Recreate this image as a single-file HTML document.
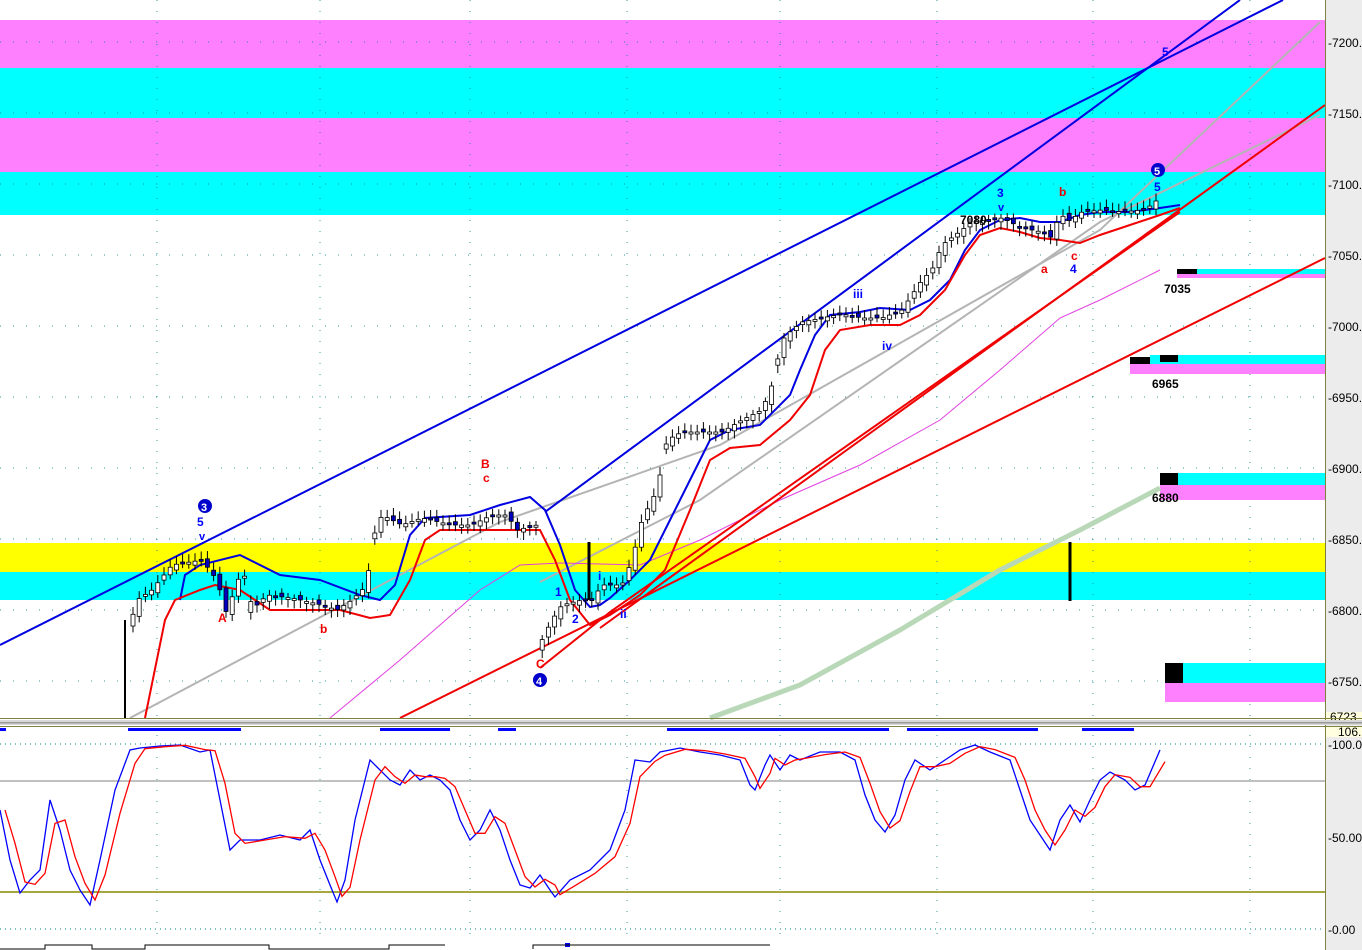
<!DOCTYPE html>
<html><head><meta charset="utf-8"><style>
html,body{margin:0;padding:0;background:#fff;width:1362px;height:950px;overflow:hidden}
svg{display:block;font-family:"Liberation Sans",sans-serif}
</style></head><body>
<svg id="s" width="1362" height="950" xmlns="http://www.w3.org/2000/svg">
<rect x="0" y="0" width="1362" height="950" fill="#fff"/>
<rect x="0" y="20" width="1325" height="48" fill="#ff80ff"/>
<rect x="0" y="68" width="1325" height="50" fill="#00ffff"/>
<rect x="0" y="118" width="1325" height="54" fill="#ff80ff"/>
<rect x="0" y="172" width="1325" height="43" fill="#00ffff"/>
<rect x="0" y="543" width="1325" height="29" fill="#ffff00"/>
<rect x="0" y="572" width="1325" height="28" fill="#00ffff"/>
<g id="grid" stroke="#008080" stroke-width="1" stroke-dasharray="1,10" opacity="0.8"></g>
<rect x="1177" y="269" width="20" height="5" fill="#000"/><rect x="1197" y="269" width="128" height="5" fill="#0ff"/><rect x="1177" y="274" width="148" height="4" fill="#ff80ff"/>
<rect x="1130" y="357" width="20" height="8" fill="#000"/><rect x="1150" y="355" width="175" height="9" fill="#0ff"/><rect x="1160" y="355" width="18" height="7" fill="#000"/><rect x="1130" y="364" width="195" height="10" fill="#ff80ff"/>
<rect x="1160" y="473" width="18" height="12" fill="#000"/><rect x="1178" y="473" width="147" height="12" fill="#0ff"/><rect x="1160" y="485" width="165" height="15" fill="#ff80ff"/>
<rect x="1165" y="663" width="18" height="20" fill="#000"/><rect x="1183" y="663" width="142" height="20" fill="#0ff"/><rect x="1165" y="683" width="160" height="19" fill="#ff80ff"/>
<g id="lines" fill="none"></g>
<g id="candles"></g>
<line x1="1070" y1="542" x2="1070" y2="601" stroke="#000" stroke-width="3"/>
<line x1="589" y1="542" x2="589" y2="600" stroke="#000" stroke-width="3"/>
<g font-size="12" font-weight="bold">
<text x="197" y="526" fill="#00f">5</text><text x="199" y="540" fill="#00f" font-size="11">v</text>
<text x="218" y="622" fill="#e00">A</text><text x="320" y="633" fill="#e00">b</text>
<text x="481" y="468" fill="#e00">B</text><text x="483" y="482" fill="#e00">c</text>
<text x="536" y="668" fill="#e00">C</text>
<text x="555" y="596" fill="#00f">1</text><text x="572" y="623" fill="#00f">2</text>
<text x="598" y="580" fill="#00f">i</text><text x="620" y="618" fill="#00f">ii</text>
<text x="853" y="298" fill="#00f">iii</text><text x="882" y="350" fill="#00f">iv</text>
<text x="997" y="197" fill="#00f">3</text><text x="998" y="211" fill="#00f" font-size="11">v</text>
<text x="960" y="224" fill="#000">7080</text>
<text x="1059" y="196" fill="#e00">b</text>
<text x="1041" y="273" fill="#e00">a</text><text x="1071" y="260" fill="#e00">c</text><text x="1070" y="273" fill="#00f">4</text>
<text x="1154" y="191" fill="#00f">5</text><text x="1162" y="56" fill="#00f">5</text>
<text x="1164" y="293" fill="#000">7035</text><text x="1152" y="388" fill="#000">6965</text><text x="1152" y="502" fill="#000">6880</text>
</g>
<circle cx="205" cy="506" r="7" fill="#00c"/><text x="201" y="511" fill="#fff" font-size="11" font-weight="bold">3</text>
<circle cx="540" cy="680" r="7" fill="#00c"/><text x="536" y="685" fill="#fff" font-size="11" font-weight="bold">4</text>
<circle cx="1158" cy="170" r="7" fill="#00c"/><text x="1154" y="175" fill="#fff" font-size="11" font-weight="bold">5</text>
<rect x="1325" y="0" width="37" height="950" fill="#ececec"/>
<line x1="1325.5" y1="0" x2="1325.5" y2="950" stroke="#808040"/>
<g id="ax" font-size="12" fill="#000"></g>
<rect x="1326" y="712" width="36" height="10" fill="#ffffe0"/><text x="1330" y="721" font-size="12">6723</text>
<rect x="0" y="718" width="1362" height="1" fill="#808040"/>
<rect x="0" y="720" width="1362" height="5" fill="#d8d8d8"/><rect x="0" y="722" width="1362" height="1.5" fill="#999"/>
<rect x="0" y="726" width="1362" height="1" fill="#808040"/>
<rect x="1326" y="727" width="36" height="10" fill="#ffffe0"/><text x="1338" y="736" font-size="12">106.</text>
<g fill="#00f"><rect x="0" y="728" width="6" height="3"/><rect x="128" y="728" width="113" height="3"/><rect x="380" y="728" width="70" height="3"/><rect x="498" y="728" width="18" height="3"/><rect x="667" y="728" width="222" height="3"/><rect x="907" y="728" width="131" height="3"/><rect x="1082" y="728" width="52" height="3"/><rect x="565" y="943" width="5" height="4"/></g>
<line x1="0" y1="781" x2="1325" y2="781" stroke="#808080"/>
<line x1="0" y1="892" x2="1325" y2="892" stroke="#8a8a00" stroke-width="1.5"/>
<line x1="0" y1="929" x2="1325" y2="929" stroke="#008080" stroke-dasharray="1,4"/>
<line x1="0" y1="744" x2="1325" y2="744" stroke="#008080" stroke-dasharray="1,4"/>
<g id="stoch" fill="none"></g>
<text x="1328" y="749" font-size="12">-100.0</text><text x="1328" y="842" font-size="12">-50.00</text><text x="1328" y="934" font-size="12">-0.00</text>
<polyline points="0,949 45,949 45,945 92,945 92,949 145,949 145,945 269,945 269,949 389,949 389,945 445,945" fill="none" stroke="#000"/>
<polyline points="533,949 533,945 770,945" fill="none" stroke="#000"/>
</svg>
<script>
(function(){
var NS="http://www.w3.org/2000/svg";
function el(p,t,a){var e=document.createElementNS(NS,t);for(var k in a)e.setAttribute(k,a[k]);document.getElementById(p).appendChild(e);return e;}
function pl(p,pts,c,w){el(p,"polyline",{points:pts.map(function(q){return q.join(",")}).join(" "),stroke:c,"stroke-width":w,fill:"none"});}
[157,320,470,627,780,937,1093,1250].forEach(function(x){el("grid","line",{x1:x,y1:0,x2:x,y2:718});el("grid","line",{x1:x,y1:735,x2:x,y2:940});});
[42,113,184,255,326,397,468,539,610,681].forEach(function(y){el("grid","line",{x1:0,y1:y,x2:1325,y2:y,"stroke-dasharray":"1,12"});});
var lab=["7200.","7150.","7100.","7050.","7000.","6950.","6900.","6850.","6800.","6750."];
lab.forEach(function(t,i){var y=42+i*71;var e=el("ax","text",{x:1328,y:y+5});e.textContent="-"+t;});
pl("lines",[[710,718],[800,685],[900,630],[1000,570],[1080,530],[1160,488]],"#b8d8b8",5);
pl("lines",[[130,718],[500,522],[720,445],[1100,230],[1320,22]],"#b4b4b4",2);
pl("lines",[[540,582],[700,500],[1100,222],[1320,115]],"#b4b4b4",2);
pl("lines",[[330,718],[400,660],[480,590],[520,565],[560,563],[640,565],[700,540],[780,500],[860,465],[940,420],[1000,370],[1060,318],[1100,300],[1160,270]],"#e040e0",1);
pl("lines",[[0,645],[1283,0]],"#0000e0",2);
pl("lines",[[545,512],[1240,0]],"#0000e0",2);
pl("lines",[[400,718],[1325,258]],"#f00000",2);
pl("lines",[[540,668],[610,612],[1180,212]],"#f00000",2);
pl("lines",[[600,628],[1325,105]],"#f00000",2);
var blue=[[180,600],[185,575],[200,565],[240,555],[280,575],[320,580],[360,595],[380,600],[395,585],[410,535],[425,518],[470,515],[500,505],[530,497],[545,510],[560,545],[575,590],[590,607],[600,605],[610,598],[630,580],[650,560],[670,520],[690,480],[710,440],[730,430],[760,425],[790,395],[800,370],[815,335],[830,315],[860,312],[880,308],[910,310],[930,300],[950,280],[965,250],[980,230],[1000,220],[1020,218],[1040,222],[1060,222],[1080,215],[1100,212],[1130,212],[1160,208],[1180,205]];
var red=[[145,718],[165,620],[175,600],[200,590],[215,585],[240,590],[270,610],[300,610],[340,610],[370,618],[390,615],[410,580],[425,540],[440,530],[500,530],[540,530],[555,560],[570,600],[590,625],[610,615],[640,595],[665,570],[690,510],[710,460],[730,448],[760,445],[790,420],[810,395],[825,350],[840,330],[870,325],[900,325],[920,315],[945,290],[965,255],[980,235],[1000,228],[1020,232],[1040,238],[1060,240],[1080,243],[1100,235],[1130,225],[1160,215],[1180,208]];
pl("lines",blue,"#0000e0",2);pl("lines",red,"#f00000",2);
pl("lines",[[125,718],[125,620]],"#000",2);
var P=[[128,625],[135,600],[150,590],[170,565],[200,560],[215,580],[225,615],[235,580],[245,575],[250,610],[265,595],[290,598],[320,605],[335,610],[350,600],[365,585],[370,540],[380,515],[400,525],[420,518],[450,525],[470,525],[490,515],[505,515],[515,530],[535,525],[540,640],[550,620],[560,605],[580,600],[590,600],[600,585],[620,585],[630,560],[640,520],[655,490],[665,440],[680,432],[720,432],[740,420],[760,410],[770,385],[780,340],[790,330],[800,322],[820,318],[840,314],[860,318],[880,318],[900,310],[910,295],[920,280],[930,270],[940,245],[960,230],[970,222],[1000,218],[1020,228],[1040,232],[1050,238],[1058,212],[1065,222],[1080,212],[1100,210],[1120,212],[1140,210],[1150,205],[1160,195]];
function py(x){for(var i=0;i<P.length-1;i++){if(x>=P[i][0]&&x<=P[i+1][0]){var t=(x-P[i][0])/(P[i+1][0]-P[i][0]);return P[i][1]+t*(P[i+1][1]-P[i][1]);}}return P[P.length-1][1];}
var prev=py(128);
for(var x=131;x<=1158;x+=6.2){var c=py(x);if(Math.abs(c-prev)>25)prev=c+8;var o=prev+(Math.sin(x*1.7)*3);var bt=Math.min(o,c),h=Math.max(Math.abs(c-o),2);
var fill=(c<o)?"#fff":"#0000c0";
el("candles","line",{x1:x+2,y1:bt-4-Math.abs(Math.sin(x))*4,x2:x+2,y2:bt+h+4+Math.abs(Math.cos(x))*4,stroke:"#000","stroke-width":1});
el("candles","rect",{x:x,y:bt,width:4,height:h,fill:fill,stroke:"#000","stroke-width":0.8});prev=c;}
var S=[[0,810],[10,860],[20,893],[30,880],[40,870],[50,800],[60,830],[70,870],[80,890],[90,905],[100,860],[115,790],[130,750],[140,748],[160,746],[180,745],[200,752],[210,750],[220,800],[230,850],[240,840],[260,840],[280,835],[300,840],[310,830],[320,860],[330,885],[337,902],[345,880],[355,820],[370,760],[380,770],[390,780],[400,785],[410,770],[420,780],[430,775],[440,780],[450,790],[460,820],[470,840],[480,830],[490,810],[500,830],[510,860],[520,885],[530,888],[540,875],[550,890],[555,897],[570,880],[590,870],[610,850],[625,810],[635,760],[650,762],[660,752],[680,748],[700,752],[720,755],[740,760],[750,785],[755,790],[765,765],[770,755],[780,770],[790,755],[800,760],[820,752],[840,752],[855,760],[865,795],[875,820],[885,832],[895,815],[905,780],[915,760],[930,770],[945,760],[960,750],[975,745],[990,752],[1010,760],[1020,790],[1030,820],[1040,835],[1050,850],[1060,820],[1070,805],[1080,822],[1090,800],[1100,780],[1110,772],[1125,780],[1135,790],[1145,785],[1160,750]];
var R=S.map(function(p,i){var q=S[Math.max(0,i-1)];return [p[0]+5,(p[1]*2+q[1])/3];});
pl("stoch",S,"#0000ff",1.3);pl("stoch",R,"#ff0000",1.3);
})();
</script>
</body></html>
